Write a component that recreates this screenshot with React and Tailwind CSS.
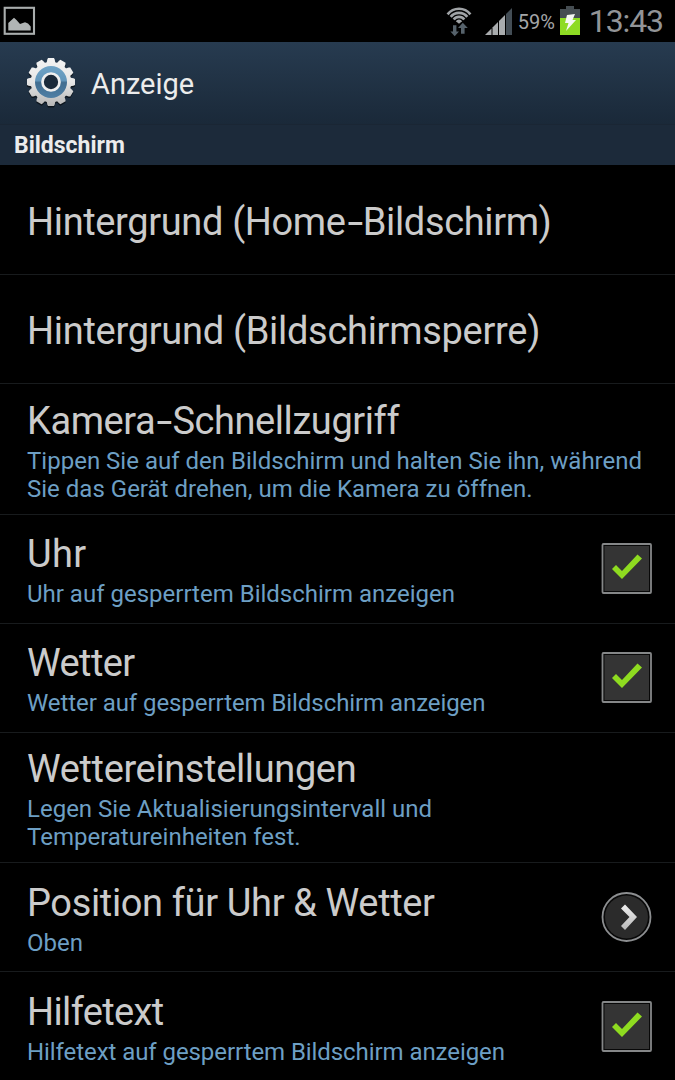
import { Fragment, useState } from 'react'
import { clsx } from 'clsx'

const ROWS = [
  { id:'home',    title:'Hintergrund (Home-Bildschirm)', height:'h-[110px]', pad:'pt-[34px]' },
  { id:'lock',    title:'Hintergrund (Bildschirmsperre)', height:'h-[109px]', pad:'pt-[33px]' },
  { id:'camera',  title:'Kamera-Schnellzugriff', lines:['Tippen Sie auf den Bildschirm und halten Sie ihn, während','Sie das Gerät drehen, um die Kamera zu öffnen.'], height:'h-[131px]', pad:'pt-[14px]' },
  { id:'clock',   title:'Uhr', lines:['Uhr auf gesperrtem Bildschirm anzeigen'], control:'check', height:'h-[109px]', pad:'pt-4' },
  { id:'weather', title:'Wetter', lines:['Wetter auf gesperrtem Bildschirm anzeigen'], control:'check', height:'h-[109px]', pad:'pt-4' },
  { id:'wset',    title:'Wettereinstellungen', lines:['Legen Sie Aktualisierungsintervall und','Temperatureinheiten fest.'], height:'h-[130px]', pad:'pt-[13px]' },
  { id:'pos',     title:'Position für Uhr & Wetter', lines:['Oben'], control:'more', height:'h-[109px]', pad:'pt-[17px]' },
  { id:'help',    title:'Hilfetext', lines:['Hilfetext auf gesperrtem Bildschirm anzeigen'], control:'check', height:'h-[109px]', pad:'pt-[17px]' },
]

const TITLE_TRACKING = {
  home:'tracking-[-0.36px]', lock:'tracking-[-0.29px]', camera:'tracking-[-0.42px]', clock:'tracking-[0.3px]',
  weather:'tracking-[-0.6px]', wset:'tracking-[-0.37px]', pos:'tracking-[-0.36px]', help:'tracking-[-0.65px]',
}

const TEXT_TRACKING = {
  camera:'tracking-[0.01px]', weather:'tracking-[-0.07px]', help:'tracking-[-0.07px]',
}

function StatusBar() {
  return (
    <div className="flex h-[42px] flex-shrink-0 items-start bg-black">
      <svg className="ml-[3px] mt-[6px]" width="33" height="30" viewBox="0 0 33 30">
        <rect x="1.700" y="1.800" width="29.300" height="26" fill="none" stroke="#a9adad" strokeWidth="2.100" />
        <path d="M5.300 24.500V17L8 14.500L11 11.800L13.500 14L17 18L22 16.200L25 17.500L27.700 20.500V24.500Z" fill="#b0b4b4" />
      </svg>
      <div className="flex-1" />
      <svg className="mt-[5px]" width="30" height="33" viewBox="0 0 30 33">
        <g fill="none" stroke="#a0a3a6" strokeWidth="2.700">
          <path d="M3.600 9.300A14.500 14.500 0 0 1 26.400 9.300" />
          <path d="M6.700 11.900A10.600 10.600 0 0 1 23.300 11.900" />
          <path d="M9.700 14.500A6.800 6.800 0 0 1 20.300 14.500" />
        </g>
        <path d="M11.800 16.200A4 4 0 0 1 18.200 16.200L15 18.700Z" fill="#a0a3a6" />
        <path d="M9 20.300H12.400V26.500H15L10.700 31.300L6.400 26.500H9Z" fill="#56626b" />
        <path d="M17 28.800H20.600V23H23.800L18.800 17.800L14 23H17Z" fill="#56626b" />
      </svg>
      <svg className="ml-[11px] mt-[7px]" width="28" height="29" viewBox="0 0 28 29">
        <path d="M0 28L6.500 21.500V28Z" fill="#a9acae" />
        <path d="M7.500 20.500L13 15V28H7.500Z" fill="#a9acae" />
        <path d="M14 14L20 8V28H14Z" fill="#a9acae" />
        <path d="M21 7L27 1V28H21Z" fill="#434d55" />
      </svg>
      <span className="ml-[5px] mt-[9px] text-[20px] leading-[26px] text-[#a4a6a8]">59%</span>
      <svg className="ml-[5px] mt-[6px]" width="20" height="30" viewBox="0 0 20 30">
        <path d="M6 0H14V3H20V12H0V3H6Z" fill="#454d52" />
        <rect y="12" width="20" height="17" fill="#8edb24" />
        <path d="M7 9L15 8L12.500 14H16L6 25L8.500 17H5Z" fill="#f5f8f3" />
      </svg>
      <span className="mr-[12px] ml-[9px] text-[32px] leading-[42px] tracking-[-1.1px] text-[#929497]">13:43</span>
    </div>
  )
}

function Gear() {
  const teeth = [0, 30, 60, 90, 120, 150, 180, 210, 240, 270, 300, 330]
  return (
    <svg width="50" height="52" viewBox="0 0 50 52" className="flex-shrink-0">
      <defs>
        <linearGradient id="metal" x1="0" y1="0" x2="0" y2="50" gradientUnits="userSpaceOnUse">
          <stop offset="0" stopColor="#f4f4f4" />
          <stop offset="0.5" stopColor="#e6e6e6" />
          <stop offset="1" stopColor="#b4b4b4" />
        </linearGradient>
        <linearGradient id="blue" x1="0" y1="0" x2="0" y2="1">
          <stop offset="0" stopColor="#6fa3c6" />
          <stop offset="0.45" stopColor="#6296bb" />
          <stop offset="0.52" stopColor="#416d90" />
          <stop offset="1" stopColor="#4f7fa5" />
        </linearGradient>
      </defs>
      {['#0c141c', 'url(#metal)'].map((fill, i) => (
        <g key={fill} fill={fill} transform={i === 0 ? 'translate(0 1.5)' : undefined}>
          <circle cx="25" cy="25" r="20.3" />
          {teeth.map(a => {
            const t = (a * Math.PI) / 180
            const p = (r, d) => `${25 + r * Math.sin(t) + d * Math.cos(t)},${25 - r * Math.cos(t) + d * Math.sin(t)}`
            return <polygon key={a} points={[p(18, -4.6), p(22.5, -3.7), p(24, -3), p(24, 3), p(22.5, 3.7), p(18, 4.6)].join(' ')} />
          })}
        </g>
      ))}
      <circle cx="25" cy="25" r="16" fill="url(#blue)" />
      <circle cx="25" cy="25" r="8.500" fill="#1b2a3a" stroke="#efefef" strokeWidth="2.700" />
    </svg>
  )
}

function CheckBox({ checked, onChange }) {
  return (
    <button role="checkbox" aria-checked={checked} onClick={onChange} className="block h-[51px] w-[51px]">
      <svg width="51" height="51" viewBox="0 0 51 51">
        <rect x="1.500" y="1" width="48.500" height="49" rx="1" fill="#080808" stroke="#858788" strokeWidth="1.800" />
        <rect x="3.500" y="3" width="44.500" height="45" fill="#343434" />
        {checked && <path d="M11 26L15 22L21 28L36.500 11.500L41 15.500L21 36Z" fill="#8edb20" />}
      </svg>
    </button>
  )
}

function MoreButton() {
  return (
    <button className="block h-[51px] w-[51px]">
      <svg width="51" height="51" viewBox="0 0 51 51">
        <defs>
          <linearGradient id="arrow" x1="0" y1="0" x2="0" y2="1">
            <stop offset="0" stopColor="#f0f0f0" />
            <stop offset="1" stopColor="#b8b8b8" />
          </linearGradient>
        </defs>
        <circle cx="25.500" cy="25" r="24" fill="#080808" stroke="#8c8e90" strokeWidth="1.800" />
        <circle cx="25.500" cy="25" r="21.500" fill="#2b2b2b" />
        <path d="M20 16.500L24 12.500L36 25L24 38L20 34L28.500 25Z" fill="url(#arrow)" />
      </svg>
    </button>
  )
}

// hyphens are drawn wider than Roboto's own
function Title({ text, className }) {
  return (
    <p className={clsx('text-[38px] leading-[47px] text-[#cbcbcb]', className)}>
      {text.split('-').map((part, i) => (
        <Fragment key={part}>
          {i > 0 && <span className="mr-[3px] ml-[4px] inline-block scale-x-150">-</span>}
          {part}
        </Fragment>
      ))}
    </p>
  )
}

export default function App() {
  const [checked, setChecked] = useState({ clock:true, weather:true, help:true })
  const toggle = id => setChecked(c => ({ ...c, [id]: !c[id] }))

  return (
    <div className="flex h-[1080px] w-[675px] flex-col overflow-hidden bg-black font-[Roboto,sans-serif]">
      <StatusBar />
      <header className="flex h-[82px] flex-shrink-0 items-center bg-linear-to-b from-[#273b50] to-[#1a2939] pl-[26px]">
        <Gear />
        <h1 className="mt-[2px] ml-[15px] text-[29px] leading-[34px] text-[#ececec]">Anzeige</h1>
      </header>
      <div className="flex h-[41px] flex-shrink-0 items-center border-t border-[#1a2634] bg-[#1c2a3a] pt-[2px] pl-[14px]">
        <h2 className="text-[23px] leading-7 font-bold text-[#ececec]">Bildschirm</h2>
      </div>
      <main>
        {ROWS.map(({ id, title, lines=[], control, height, pad }) => (
          <div key={id} className={clsx('flex border-b border-[#181b1d] pr-[23px] pl-[27px]', height)}>
            <div className={clsx('min-w-0 flex-1 whitespace-nowrap', pad)}>
              <Title text={title} className={TITLE_TRACKING[id]} />
              <div className={clsx('pt-[2px] text-[24px] leading-[28px] text-[#6d9fc4]', TEXT_TRACKING[id])}>
                {lines.map(l => <p key={l}>{l}</p>)}
              </div>
            </div>
            {control && (
              <div className={clsx('flex items-center', id !== 'pos' && id !== 'help' && 'pb-[2px]')}>
                {control === 'check'
                  ? <CheckBox checked={checked[id]} onChange={() => toggle(id)} />
                  : <MoreButton />}
              </div>
            )}
          </div>
        ))}
      </main>
    </div>
  )
}
